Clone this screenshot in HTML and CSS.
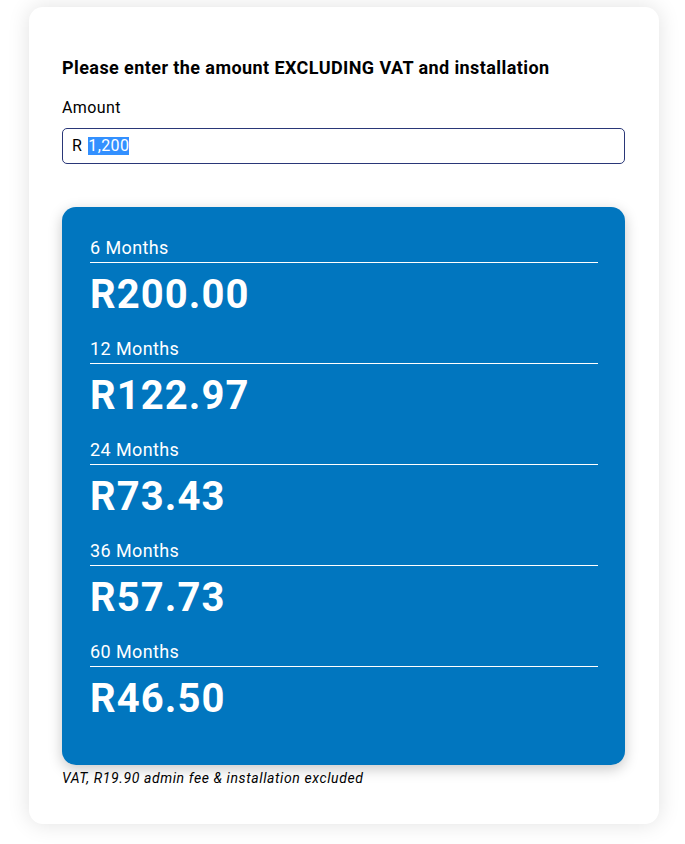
FILE: index.html
```html
<!DOCTYPE html>
<html lang="en">
<head>
<meta charset="utf-8">
<title>Finance calculator</title>
<link rel="stylesheet" href="styles.css">
</head>
<body>
<main class="card">
  <h1 class="title">Please enter the amount EXCLUDING VAT and installation</h1>
  <label class="label" for="amount">Amount</label>
  <div class="field" id="amount" role="textbox"><span class="prefix">R</span><span class="sel">1,200</span></div>

  <section class="panel">
    <div class="term">
      <div class="term-label">6 Months</div>
      <div class="term-price">R200.00</div>
    </div>
    <div class="term">
      <div class="term-label">12 Months</div>
      <div class="term-price">R122.97</div>
    </div>
    <div class="term">
      <div class="term-label">24 Months</div>
      <div class="term-price">R73.43</div>
    </div>
    <div class="term">
      <div class="term-label">36 Months</div>
      <div class="term-price">R57.73</div>
    </div>
    <div class="term">
      <div class="term-label">60 Months</div>
      <div class="term-price">R46.50</div>
    </div>
  </section>
  <p class="note">VAT, R19.90 admin fee &amp; installation excluded</p>
</main>
</body>
</html>
```
FILE: styles.css
```css
html, body {
  margin: 0;
  padding: 0;
  background: #ffffff;
}
body {
  font-family: Roboto, "Liberation Sans", Arial, sans-serif;
  color: #000;
  padding: 7px 26px 20px 29px;
  letter-spacing: 0.4px;
}
.card {
  width: 630px;
  box-sizing: border-box;
  background: #fff;
  border-radius: 14px;
  box-shadow: 0 0 22px rgba(0, 0, 0, 0.12);
  padding: 50px 34px 38px 33px;
}
.title {
  margin: 0;
  font-size: 18px;
  font-weight: 700;
  line-height: 21px;
  letter-spacing: 0.42px;
}
.label {
  display: block;
  margin-top: 20px;
  font-size: 16px;
  line-height: 19px;
}
.field {
  margin-top: 11px;
  height: 36px;
  box-sizing: border-box;
  border: 1px solid #2a3778;
  border-radius: 5px;
  padding: 0 9px;
  display: flex;
  align-items: center;
  font-size: 16px;
  line-height: 18px;
}
.prefix {
  margin-right: 6px;
}
.sel {
  background: #3390ff;
  color: #fff;
}
.panel {
  margin-top: 43px;
  background: #0176bf;
  border-radius: 14px;
  box-shadow: 0 4px 14px rgba(0, 0, 0, 0.22);
  padding: 30px 27px 23px 28px;
  color: #fff;
}
.term {
  margin-bottom: 20px;
}
.term-label {
  font-size: 18px;
  line-height: 21px;
  padding-bottom: 4px;
  border-bottom: 1px solid #fff;
}
.term-price {
  margin-top: 8px;
  font-size: 40px;
  font-weight: 700;
  line-height: 47px;
  letter-spacing: 1.1px;
}
.note {
  margin: 5px 0 0;
  font-size: 14px;
  font-style: italic;
  font-weight: 400;
  line-height: 16px;
  letter-spacing: 0.6px;
}
```
